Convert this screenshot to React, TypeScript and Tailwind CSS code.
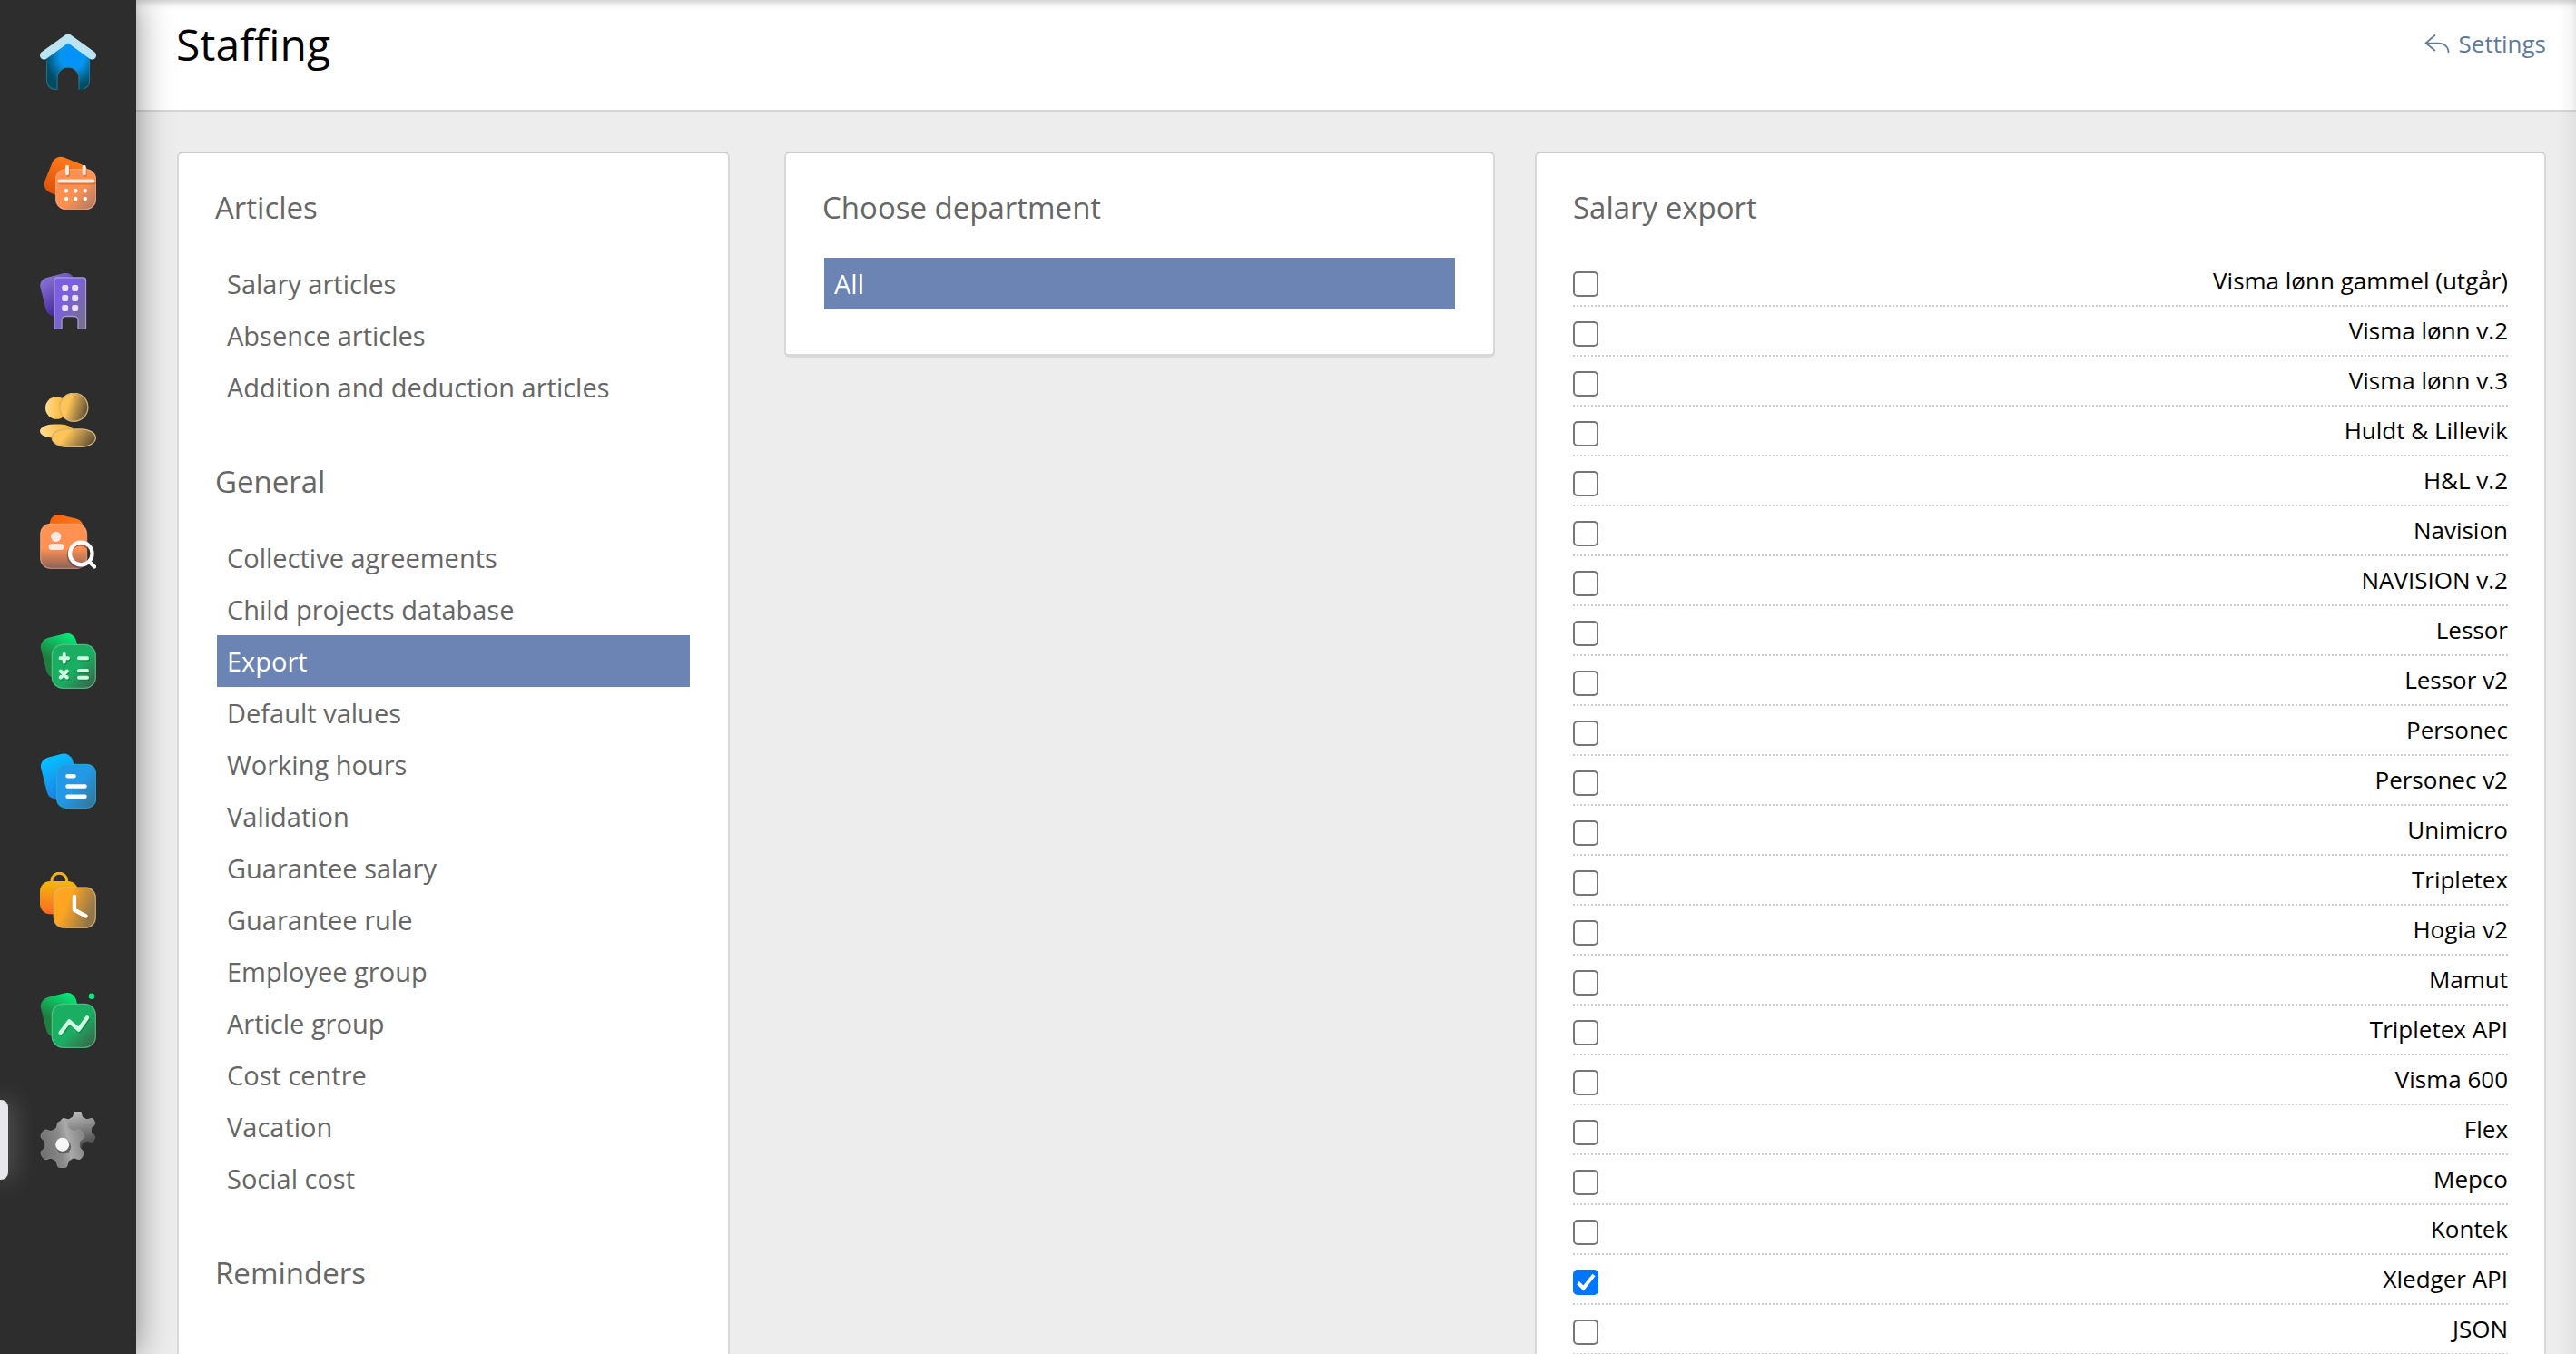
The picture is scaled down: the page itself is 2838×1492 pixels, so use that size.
import React, { useState } from "react";

const menu = [
  {
    title: "Articles",
    items: ["Salary articles", "Absence articles", "Addition and deduction articles"],
  },
  {
    title: "General",
    items: [
      "Collective agreements",
      "Child projects database",
      "Export",
      "Default values",
      "Working hours",
      "Validation",
      "Guarantee salary",
      "Guarantee rule",
      "Employee group",
      "Article group",
      "Cost centre",
      "Vacation",
      "Social cost",
    ],
  },
  { title: "Reminders", items: [] },
];

const exportsList = [
  "Visma lønn gammel (utgår)",
  "Visma lønn v.2",
  "Visma lønn v.3",
  "Huldt & Lillevik",
  "H&L v.2",
  "Navision",
  "NAVISION v.2",
  "Lessor",
  "Lessor v2",
  "Personec",
  "Personec v2",
  "Unimicro",
  "Tripletex",
  "Hogia v2",
  "Mamut",
  "Tripletex API",
  "Visma 600",
  "Flex",
  "Mepco",
  "Kontek",
  "Xledger API",
  "JSON",
];

// two-stop diagonal gradient
function Grad({ id, from, to, mid = "0", x2 = "1", y2 = "1" }: any) {
  return (
    <linearGradient id={id} x1="0" y1="0" x2={x2} y2={y2}>
      <stop offset={mid} stopColor={from} />
      <stop offset="1" stopColor={to} />
    </linearGradient>
  );
}

function HomeIcon() {
  return (
    <>
      <radialGradient id="home" cx="0.6" cy="0.3" r="0.72">
        <stop offset="0" stopColor="#0091ff" />
        <stop offset="0.4" stopColor="#0795ee" />
        <stop offset="0.85" stopColor="#00506b" />
        <stop offset="1" stopColor="#004a60" />
      </radialGradient>
      <path
        d="M7 24 31 8l24 16v28a10 10 0 0 1-10 10h-2.500V49a11.500 11.500 0 0 0-23 0v13H17A10 10 0 0 1 7 52Z"
        fill="url(#home)"
      />
      <path
        d="M7.500 30v22a9.500 9.500 0 0 0 9.500 9.500h2V49a12 12 0 0 1 24 0v12.500M54.500 30v22a9.500 9.500 0 0 1-6 9"
        fill="none"
        stroke="#2b7f98"
        strokeOpacity="0.7"
        strokeWidth="1.200"
      />
      <path d="M4.500 24 31 4.800 57.500 24" fill="none" stroke="#bce3f2" strokeWidth="9" strokeLinecap="round" strokeLinejoin="round" />
    </>
  );
}

function CalendarIcon() {
  return (
    <>
      <Grad id="calBack" from="#ff7a1a" to="#e0500a" x2="0" />
      <Grad id="calFront" from="#ff9050" to="#a3796c" mid="0.55" />
      <rect x="8" y="7" width="42" height="42" rx="10" transform="rotate(22 29 28)" fill="url(#calBack)" />
      <rect x="17.600" y="17.600" width="44" height="44" rx="11" fill="url(#calFront)" stroke="#ffb184" strokeOpacity="0.7" strokeWidth="1.300" />
      <g fill="none" stroke="#c2571b" strokeOpacity="0.5" strokeWidth="4" strokeLinecap="round" transform="translate(1 2)">
        <path d="M30 15v7M48.700 15v7M21.500 30.600h37" />
      </g>
      <g fill="none" stroke="#fbe9dd" strokeWidth="4" strokeLinecap="round">
        <path d="M30 14.700v7.600M48.700 14.700v7.600M21.500 30.600h37" />
      </g>
      <g fill="#fff">
        {[29, 39.3, 49.7].map((cx) => (
          <React.Fragment key={cx}>
            <circle cx={cx} cy="41.300" r="2.200" />
            <circle cx={cx} cy="50" r="2.200" />
          </React.Fragment>
        ))}
      </g>
    </>
  );
}

function BuildingIcon() {
  return (
    <>
      <Grad id="bldBack" from="#8f78d8" to="#3d2396" x2="0.4" />
      <Grad id="bldFront" from="#7a60e0" to="#77717f" mid="0.35" />
      <rect x="3" y="2" width="38" height="43" rx="9" transform="rotate(-14 21.500 23.500)" fill="url(#bldBack)" />
      <path
        d="M16 8a3 3 0 0 1 3-3h28.500a3 3 0 0 1 3 3v53.400H42V52a4.500 4.500 0 0 0-4.500-4.500h-9A4.500 4.500 0 0 0 24 52v9.400h-8Z"
        fill="url(#bldFront)"
        stroke="#a697d6"
        strokeWidth="1.300"
      />
      <g fill="#e9deff">
        {[13, 24, 35].map((y) => (
          <React.Fragment key={y}>
            <rect x="24.200" y={y} width="7" height="7" rx="2.200" />
            <rect x="35.200" y={y} width="7" height="7" rx="2.200" />
          </React.Fragment>
        ))}
      </g>
    </>
  );
}

function PeopleIcon() {
  return (
    <>
      <Grad id="pplBack" from="#ffdc96" to="#ffae12" y2="0" />
      <linearGradient id="pplFront" x1="0" y1="0.3" x2="1" y2="0.6">
        <stop offset="0.3" stopColor="#ffc457" />
        <stop offset="0.6" stopColor="#b8904a" />
        <stop offset="1" stopColor="#5f5134" />
      </linearGradient>
      <circle cx="18.300" cy="16.500" r="12.300" fill="url(#pplBack)" />
      <circle cx="37.300" cy="15.800" r="15.600" fill="url(#pplFront)" stroke="#d1b27a" strokeWidth="1.300" />
      <rect x="0" y="34.500" width="37" height="15" rx="15" ry="7.500" fill="url(#pplBack)" />
      <rect x="13.300" y="39.800" width="48" height="19.500" rx="16" ry="9.700" fill="url(#pplFront)" stroke="#d1b27a" strokeWidth="1.300" />
    </>
  );
}

function SearchIcon() {
  return (
    <>
      <Grad id="srcBack" from="#f5640c" to="#ff7a1c" y2="0" />
      <Grad id="srcFront" from="#ff9152" to="#8b625a" mid="0.55" x2="0" />
      <rect x="8.500" y="4" width="37" height="38" rx="9" transform="rotate(14 27 23)" fill="url(#srcBack)" />
      <rect x="0.600" y="12.300" width="51" height="49" rx="11" fill="url(#srcFront)" stroke="#ffb48c" strokeOpacity="0.6" strokeWidth="1.300" />
      <circle cx="17.700" cy="26.300" r="5.600" fill="#ffe9e0" />
      <rect x="9.700" y="34" width="16.600" height="7" rx="3.500" fill="#ffe9e0" />
      <g fill="none" stroke="#4a2f45" strokeOpacity="0.5" strokeWidth="4.500" transform="translate(-1 1.500)">
        <circle cx="45.300" cy="45" r="12.300" />
      </g>
      <g fill="none" stroke="#fff" strokeWidth="4.200" strokeLinecap="round">
        <circle cx="45.300" cy="45" r="12.300" />
        <path d="m55 54.600 5 5" />
      </g>
    </>
  );
}

function GreenCards({ id }: { id: string }) {
  return (
    <>
      <linearGradient id={id + "Back"} x1="1" y1="0" x2="0.2" y2="1">
        <stop offset="0.05" stopColor="#05f07c" />
        <stop offset="0.7" stopColor="#1d8040" />
      </linearGradient>
      <Grad id={id + "Front"} from="#1aae62" to="#3f5a45" mid="0.55" />
      <rect x="3.500" y="3" width="40" height="45" rx="10" transform="rotate(-14 23.500 25.500)" fill={`url(#${id}Back)`} />
      <rect x="13.300" y="13.300" width="48" height="48" rx="12" fill={`url(#${id}Front)`} stroke="#5fc48d" strokeOpacity="0.8" strokeWidth="1.300" />
    </>
  );
}

function CalculatorIcon() {
  return (
    <>
      <GreenCards id="calc" />
      <g fill="none" strokeLinecap="round" strokeWidth="4">
        <path d="M26.700 24v8.500M22.500 28.200h8.500M22.800 42.500l7 7M29.800 42.500l-7 7M43 28.200h9M43 42h9M43 49.700h9" stroke="#0d6b39" strokeOpacity="0.5" transform="translate(1 1.500)" />
        <path d="M26.700 24v8.500M22.500 28.200h8.500M22.800 42.500l7 7M29.800 42.500l-7 7M43 28.200h9M43 42h9M43 49.700h9" stroke="#cdfce0" />
      </g>
    </>
  );
}

function DocumentIcon() {
  return (
    <>
      <Grad id="docBack" from="#06beff" to="#1f7fe2" x2="0.2" mid="0.1" />
      <Grad id="docFront" from="#2398e6" to="#39708a" mid="0.5" />
      <rect x="4" y="3" width="36" height="47" rx="10" transform="rotate(-14 22 26.500)" fill="url(#docBack)" />
      <rect x="18.600" y="13.300" width="43" height="48" rx="10" fill="url(#docFront)" stroke="#1eaee0" strokeOpacity="0.8" strokeWidth="1.300" />
      <path d="M30.500 26.300h7M30.500 37.500h19M30.500 48.700h19" stroke="#fff" strokeWidth="4.500" strokeLinecap="round" fill="none" />
    </>
  );
}

function WorkIcon() {
  return (
    <>
      <Grad id="bag" from="#f2b90f" to="#f96a22" x2="0" />
      <Grad id="bagFront" from="#ffa522" to="#91764c" mid="0.4" y2="0.4" />
      <path d="M13 11v-1.500a8.300 8.300 0 0 1 16.600 0V11" fill="none" stroke="#f0b512" strokeWidth="3" />
      <rect x="0" y="10" width="42" height="36.300" rx="11" fill="url(#bag)" />
      <rect x="15.300" y="17" width="46" height="44.300" rx="11" fill="url(#bagFront)" stroke="#e0b678" strokeOpacity="0.8" strokeWidth="1.300" />
      <g fill="none" strokeWidth="4.500" strokeLinecap="round" strokeLinejoin="round">
        <path d="M38 27v14.700l13 7" stroke="#b8660a" strokeOpacity="0.5" transform="translate(1 1.500)" />
        <path d="M38 27v14.700l12.500 6.800" stroke="#fff" />
      </g>
    </>
  );
}

function ChartIcon() {
  return (
    <>
      <GreenCards id="chart" />
      <circle cx="57" cy="4.700" r="3.300" fill="#0ee87a" />
      <g fill="none" strokeWidth="4.500" strokeLinecap="round" strokeLinejoin="round">
        <path d="m22.700 45 9.500-12.500 10.500 9L52 28.500" stroke="#0d6b39" strokeOpacity="0.5" transform="translate(1 1.500)" />
        <path d="m22.700 45 9.500-12.500 10.500 9L52 28.500" stroke="#cdfce0" />
      </g>
    </>
  );
}

// outline of a six-toothed gear with soft shoulders
function gearPath(cx: number, cy: number, inner: number, outer: number) {
  const points = [];
  for (let i = 0; i < 180; i++) {
    const a = (i / 180) * Math.PI * 2;
    const k = (Math.tanh(2.2 * Math.cos(6 * a)) / Math.tanh(2.2) + 1) / 2;
    const r = inner + (outer - inner) * k;
    points.push(`${(cx + r * Math.sin(a)).toFixed(2)} ${(cy - r * Math.cos(a)).toFixed(2)}`);
  }
  return "M" + points.join("L") + "Z";
}

function GearIcon() {
  return (
    <>
      <Grad id="gearBack" from="#c9c9c9" to="#4a4a4a" x2="0.2" />
      <linearGradient id="gearFront" x1="0" y1="0.6" x2="1" y2="0.4">
        <stop offset="0" stopColor="#6f6f6f" />
        <stop offset="0.45" stopColor="#8a8a8a" />
        <stop offset="0.65" stopColor="#aaaaaa" />
        <stop offset="1" stopColor="#848484" />
      </linearGradient>
      <path d={gearPath(41.500, 20.500, 15.500, 21.500)} fill="url(#gearBack)" />
      <path d={gearPath(24.700, 36.300, 19, 25.800)} fill="url(#gearFront)" stroke="#a5a5a5" strokeOpacity="0.6" strokeWidth="1" />
      <circle cx="26.200" cy="38.500" r="8" fill="#3a3a3a" fillOpacity="0.6" />
      <circle cx="24.700" cy="36.300" r="7.500" fill="#f7f7f7" />
    </>
  );
}

const apps = [
  { name: "Home", Icon: HomeIcon },
  { name: "Calendar", Icon: CalendarIcon },
  { name: "Departments", Icon: BuildingIcon },
  { name: "Employees", Icon: PeopleIcon },
  { name: "Recruitment", Icon: SearchIcon },
  { name: "Salary", Icon: CalculatorIcon },
  { name: "Documents", Icon: DocumentIcon },
  { name: "Time", Icon: WorkIcon },
  { name: "Reports", Icon: ChartIcon },
  { name: "Settings", Icon: GearIcon, active: true },
];

function Sidebar() {
  return (
    <nav className="relative z-10 w-[150px] shrink-0 bg-[#2d2d2d] pt-[2px] shadow-[0_0_36px_rgba(0,0,0,0.45)]">
      {apps.map(({ name, Icon, active }) => (
        <a key={name} href="#" aria-label={name} className="relative flex h-[132px] items-center justify-center">
          {active && (
            <span className="absolute left-0 h-[88px] w-[9px] rounded-r-lg bg-[#e6e6eb] shadow-[0_0_28px_rgba(255,255,255,0.45)]" />
          )}
          <svg viewBox="0 0 62 62" className="h-[62px] w-[62px]" aria-hidden="true">
            <Icon />
          </svg>
        </a>
      ))}
    </nav>
  );
}

function Panel({ children, className = "" }: any) {
  return (
    <section
      className={
        "rounded-md border-2 border-b-4 border-[#d8d8d8] border-t-[#cacaca] bg-white px-10 pt-9 " + className
      }
    >
      {children}
    </section>
  );
}

function Heading({ children }: any) {
  return <h2 className="mb-[31px] text-[33px] leading-[48px] text-[#666]">{children}</h2>;
}

function MenuItem({ label, selected, onSelect }: any) {
  return (
    <li>
      <a
        href="#"
        onClick={onSelect}
        className={
          "mx-[2px] block h-[57px] px-[11px] text-[29px] leading-[57px] " +
          (selected ? "bg-[#6c84b4] text-white" : "text-[#666]")
        }
      >
        {label}
      </a>
    </li>
  );
}

function ExportRow({ label, checked, onChange }: any) {
  return (
    <li className="border-b-2 border-dotted border-[#ccc]">
      <label className="flex h-[53px] items-center justify-between text-[26px] leading-[53px] text-black">
        <span className="relative mt-1.5 h-7 w-7">
          <input
            type="checkbox"
            checked={checked}
            onChange={onChange}
            className="peer block h-7 w-7 appearance-none rounded-[5px] border-2 border-[#767676] bg-white checked:border-[#0075ff] checked:bg-[#0075ff]"
          />
          <svg viewBox="0 0 28 28" className="pointer-events-none absolute inset-0 hidden peer-checked:block" aria-hidden="true">
            <path d="m5.500 14.500 6 6L23 6" fill="none" stroke="#fff" strokeWidth="4" />
          </svg>
        </span>
        <span>{label}</span>
      </label>
    </li>
  );
}

function App() {
  const [page, setPage] = useState("Export");
  const [checked, setChecked] = useState<string[]>(["Xledger API"]);

  const toggle = (name: string) => {
    setChecked((prev) => (prev.includes(name) ? prev.filter((n) => n !== name) : [...prev, name]));
  };

  return (
    <div className="relative flex h-screen overflow-hidden bg-[#ededed] font-['Open_Sans',sans-serif]">
      <Sidebar />

      <main className="flex min-w-0 flex-1 flex-col">
        <header className="flex h-[123px] shrink-0 items-start justify-between border-b-2 border-[#d5d5d5] bg-white pr-[33px] pl-11 shadow-[inset_0_6px_8px_-4px_rgba(0,0,0,0.25)]">
          <h1 className="pt-[13px] text-[48px] leading-[72px] text-black">Staffing</h1>
          <a href="#" className="flex items-center gap-[10px] pt-7 text-[26px] leading-10 text-[#5f7b98]">
            <svg viewBox="0 0 28 22" className="h-[22px] w-7" aria-hidden="true">
              <path d="M12 1.500 1.500 10.500 12 19M1.500 10.500H15c7 0 11.500 4 11.500 10.500" fill="none" stroke="currentColor" strokeWidth="1.700" />
            </svg>
            Settings
          </a>
        </header>

        <div className="min-h-0 flex-1 overflow-hidden">
          <div className="grid grid-cols-[625fr_783fr_1114fr] gap-x-11 pt-11 pr-[33px] pl-[45px]">
            <Panel className="mr-4">
              {menu.map((group) => (
                <div key={group.title} className="mb-[52px]">
                  <Heading>{group.title}</Heading>
                  <ul>
                    {group.items.map((item) => (
                      <MenuItem key={item} label={item} selected={item === page} onSelect={() => setPage(item)} />
                    ))}
                  </ul>
                </div>
              ))}
            </Panel>

            <Panel className="self-start pb-[49px]">
              <Heading>Choose department</Heading>
              <ul>
                <MenuItem label="All" selected />
              </ul>
            </Panel>

            <Panel className="pb-12">
              <Heading>Salary export</Heading>
              <ul className="-mt-px">
                {exportsList.map((name) => (
                  <ExportRow key={name} label={name} checked={checked.includes(name)} onChange={() => toggle(name)} />
                ))}
              </ul>
            </Panel>
          </div>
        </div>
      </main>

      <div className="pointer-events-none absolute inset-y-0 right-0 w-5 bg-linear-to-l from-black/5 to-transparent" />
    </div>
  );
}

export default App;
